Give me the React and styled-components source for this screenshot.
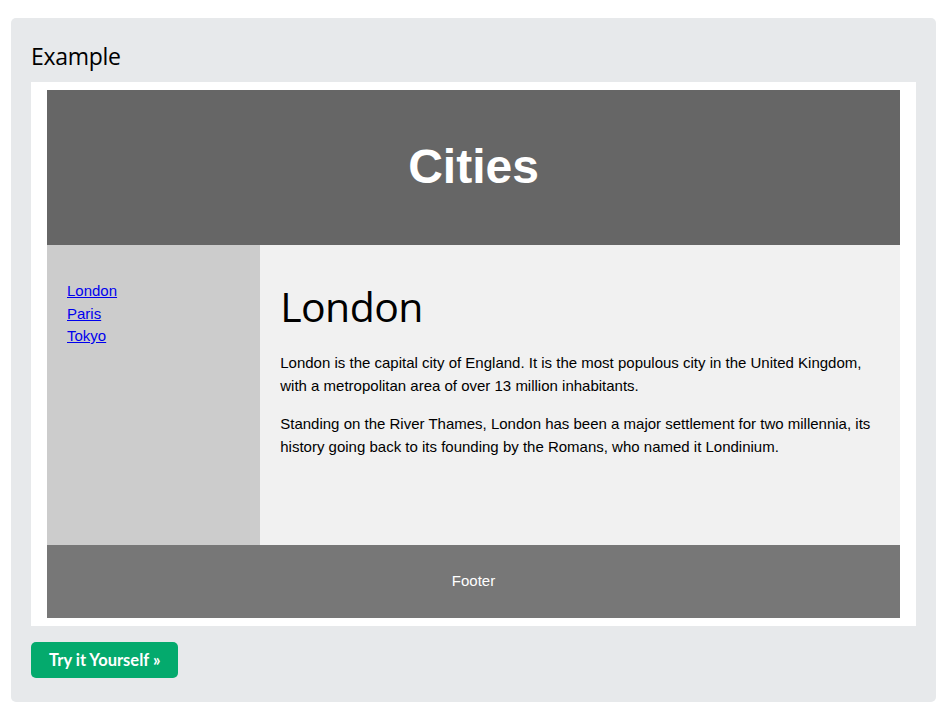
import React from "react";
import styled, { createGlobalStyle } from "styled-components";

const Global = createGlobalStyle`
  html, body { margin: 0; padding: 0; background: #fff; }
  body { font-family: "Liberation Sans", Arial, sans-serif; }
`;

const Page = styled.div`
  padding: 18px 6px 16px 11px;
`;

const Panel = styled.div`
  background: #e7e9eb;
  border-radius: 5px;
  padding: 20px 20px 24px 20px;
`;

const Title = styled.h2`
  margin: 0;
  font-family: "Open Sans", "Noto Sans", sans-serif;
  font-weight: 400;
  font-size: 23px;
  line-height: 36px;
  color: #000;
  height: 44px;
  letter-spacing: -0.3px;
`;

const Frame = styled.div`
  background: #fff;
  padding: 8px 16px;
`;

const Header = styled.header`
  background: #666;
  color: #fff;
  text-align: center;
  padding: 49px 0 51px;
  font-family: "Liberation Sans", Arial, sans-serif;
  font-weight: 700;
  font-size: 48px;
  line-height: 55px;
`;

const Body = styled.section`
  display: flex;
  height: 300px;
  font-family: "Liberation Sans", Arial, sans-serif;
  font-size: 15px;
  line-height: 23px;
`;

const Nav = styled.nav`
  flex: 0 0 25%;
  background: #ccc;
  padding: 20px;
  box-sizing: border-box;
`;

const NavList = styled.ul`
  list-style: none;
  margin: 15px 0;
  padding: 0;
  line-height: 22.5px;
`;

const NavLink = styled.a`
  color: #0000ee;
  text-decoration: underline;
`;

const Article = styled.article`
  flex: 1;
  background: #f1f1f1;
  padding: 20px;
  box-sizing: border-box;
`;

const ArticleTitle = styled.h1`
  margin: 16px 0 20px;
  font-family: "Open Sans", "Noto Sans", sans-serif;
  font-weight: 400;
  font-size: 41px;
  line-height: 50px;
  letter-spacing: -0.6px;
  color: #000;
`;

const Para = styled.p`
  margin: 0 0 15px;
  color: #000;
`;

const Footer = styled.footer`
  background: #777;
  color: #fff;
  text-align: center;
  padding: 24px 0 26px;
  font-family: "Liberation Sans", Arial, sans-serif;
  font-size: 15px;
  line-height: 23px;
`;

const Button = styled.a`
  display: inline-flex;
  align-items: center;
  margin-top: 16px;
  height: 36px;
  padding: 0 18px;
  background: #04aa6d;
  color: #fff;
  border-radius: 5px;
  font-family: Lato, "Open Sans", sans-serif;
  font-weight: 700;
  font-size: 16.5px;
  text-decoration: none;
  box-sizing: border-box;
`;

export default function App() {
  return (
    <>
      <Global />
      <Page>
        <Panel>
          <Title>Example</Title>
          <Frame>
            <Header>Cities</Header>
            <Body>
              <Nav>
                <NavList>
                  <li><NavLink href="#">London</NavLink></li>
                  <li><NavLink href="#">Paris</NavLink></li>
                  <li><NavLink href="#">Tokyo</NavLink></li>
                </NavList>
              </Nav>
              <Article>
                <ArticleTitle>London</ArticleTitle>
                <Para>
                  London is the capital city of England. It is the most populous city in the United Kingdom, with a metropolitan area of over 13 million inhabitants.
                </Para>
                <Para>
                  Standing on the River Thames, London has been a major settlement for two millennia, its history going back to its founding by the Romans, who named it Londinium.
                </Para>
              </Article>
            </Body>
            <Footer>Footer</Footer>
          </Frame>
          <Button href="#">Try it Yourself »</Button>
        </Panel>
      </Page>
    </>
  );
}
